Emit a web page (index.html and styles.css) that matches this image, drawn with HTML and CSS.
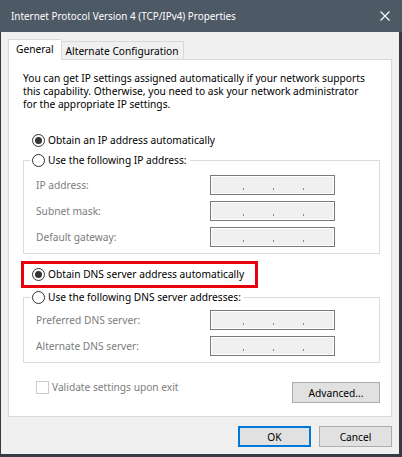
FILE: index.html
```html
<!DOCTYPE html>
<html lang="en">

<head>
    <meta charset="UTF-8">
    <meta name="viewport" content="width=device-width, initial-scale=1.0">
    <title>Internet Protocol Version 4 (TCP/IPv4) Properties</title>
    <link rel="stylesheet" href="styles.css">
</head>

<body>

    <div class="window">
        <div class="titlebar">
            <span class="title">Internet Protocol Version 4 (TCP/IPv4) Properties</span>
            <svg class="close" width="10" height="10" viewBox="0 0 10 10">
                <path d="M0.5 0.5 L9.5 9.5 M9.5 0.5 L0.5 9.5" stroke="#ffffff" stroke-width="1.1" fill="none" />
            </svg>
        </div>

        <div class="frame">
            <div class="tabs">
                <div class="tab active">General</div>
                <div class="tab">Alternate Configuration</div>
            </div>

            <div class="panel">
                <p class="intro">You can get IP settings assigned automatically if your network supports<br>this capability. Otherwise, you need to ask your network administrator<br>for the appropriate IP settings.</p>

                <label class="radio checked first"><span class="dot"></span>Obtain an IP address automatically</label>

                <fieldset class="group">
                    <legend><label class="radio"><span class="dot"></span>Use the following IP address:</label></legend>
                    <div class="rows">
                        <span class="label">IP address:</span>
                        <span class="ipbox"><i></i><i></i><i></i></span>
                        <span class="label">Subnet mask:</span>
                        <span class="ipbox"><i></i><i></i><i></i></span>
                        <span class="label">Default gateway:</span>
                        <span class="ipbox"><i></i><i></i><i></i></span>
                    </div>
                </fieldset>

                <div class="highlight">
                    <label class="radio checked"><span class="dot"></span>Obtain DNS server address automatically</label>
                </div>

                <fieldset class="group dns">
                    <legend><label class="radio"><span class="dot"></span>Use the following DNS server addresses:</label></legend>
                    <div class="rows">
                        <span class="label">Preferred DNS server:</span>
                        <span class="ipbox"><i></i><i></i><i></i></span>
                        <span class="label">Alternate DNS server:</span>
                        <span class="ipbox"><i></i><i></i><i></i></span>
                    </div>
                </fieldset>

                <div class="options">
                    <label class="check"><span class="box"></span>Validate settings upon exit</label>
                    <button class="btn advanced">Advanced...</button>
                </div>
            </div>

            <div class="footer">
                <button class="btn default">OK</button>
                <button class="btn">Cancel</button>
            </div>
        </div>
    </div>

</body>

</html>
```

FILE: styles.css
```css
body {
    margin: 0px;
    font-family: "Noto Sans", "Open Sans", sans-serif;
    font-size: 10.2px;
    color: #000000;
}

.window {
    width: 402px;
    height: 457px;
    display: flex;
    flex-direction: column;
}

.titlebar {
    flex: none;
    height: 32px;
    background: #4e5966;
    color: #ffffff;
    display: flex;
    align-items: center;
    padding: 0px 12px 0px 11px;
    font-size: 9.9px;
}

.titlebar .title {
    flex: 1;
}

.frame {
    flex: 1;
    background: #f0f0f0;
    border: solid #363c43;
    border-width: 0px 3px 3px 1px;
    padding: 7px 7px 0px 7px;
    display: flex;
    flex-direction: column;
}

/* tabs */

.tabs {
    display: flex;
    align-items: flex-end;
    height: 20px;
}

.tab {
    box-sizing: border-box;
    height: 18px;
    line-height: 18px;
    padding: 0px 4px;
    border: 1px solid #d9d9d9;
    border-bottom: none;
    background: #f0f0f0;
}

.tab.active {
    height: 21px;
    line-height: 19px;
    margin-bottom: -1px;
    padding: 0px 7px;
    background: #ffffff;
    border-right: none;
    position: relative;
    z-index: 1;
}

.panel {
    background: #ffffff;
    border: 1px solid #d9d9d9;
    padding: 12px 11px 13px 14px;
    display: flex;
    flex-direction: column;
}

.intro {
    margin: 0px;
    line-height: 13px;
}

/* radios */

.radio {
    display: flex;
    align-items: center;
    gap: 3px;
    height: 16px;
    line-height: 16px;
    white-space: nowrap;
}

.radio .dot {
    box-sizing: border-box;
    width: 13px;
    height: 13px;
    border: 1px solid #333333;
    border-radius: 50%;
    background: #ffffff;
    display: flex;
    align-items: center;
    justify-content: center;
}

.radio.checked .dot::after {
    content: '';
    width: 7px;
    height: 7px;
    border-radius: 50%;
    background: #333333;
}

.radio.first {
    margin: 21px 0px 0px 9px;
}

/* group boxes */

.group {
    margin: 4px 0px 0px 0px;
    padding: 0px;
    border: 1px solid #dcdcdc;
    min-width: 0px;
}

.group legend {
    margin-left: 7px;
    padding: 0px 3px 0px 1px;
    background: #ffffff;
}

.group .rows {
    display: grid;
    grid-template-columns: 174px 125px;
    row-gap: 6px;
    align-items: center;
    padding: 7px 0px 6px 12px;
}

.group.dns {
    margin-top: 1px;
}

.group.dns .rows {
    padding-top: 5px;
}

.label {
    color: #7c7c7c;
}

.ipbox {
    box-sizing: border-box;
    height: 20px;
    border: 1px solid #7a7a7a;
    box-shadow: inset 0px 0px 0px 1px #ffffff;
    background: #f0f0f0;
    display: flex;
    align-items: flex-end;
    gap: 29px;
    padding: 0px 0px 4px 32px;
}

.ipbox i {
    width: 1px;
    height: 2px;
    background: #7f8a96;
}

/* red marker round the DNS option */

.highlight {
    width: fit-content;
    margin: 7px 0px 0px -2px;
    padding: 2px 11px 3px 8px;
    border: 3px solid #e8000b;
}

/* bottom of the panel */

.options {
    margin-top: 19px;
    display: flex;
    justify-content: space-between;
    align-items: flex-start;
}

.check {
    display: flex;
    align-items: center;
    gap: 3px;
    margin: -1px 0px 0px 13px;
    line-height: 13px;
    color: #7c7c7c;
}

.check .box {
    box-sizing: border-box;
    width: 13px;
    height: 13px;
    border: 1px solid #cccccc;
    background: #ffffff;
}

.btn {
    box-sizing: border-box;
    height: 21px;
    width: 73px;
    padding: 0px;
    font-family: inherit;
    font-size: inherit;
    color: #000000;
    background: #e1e1e1;
    border: 1px solid #adadad;
}

.btn.advanced {
    width: 88px;
}

.btn.default {
    border: 2px solid #0078d7;
}

.footer {
    margin-top: 9px;
    display: flex;
    justify-content: flex-end;
    gap: 8px;
}
```
